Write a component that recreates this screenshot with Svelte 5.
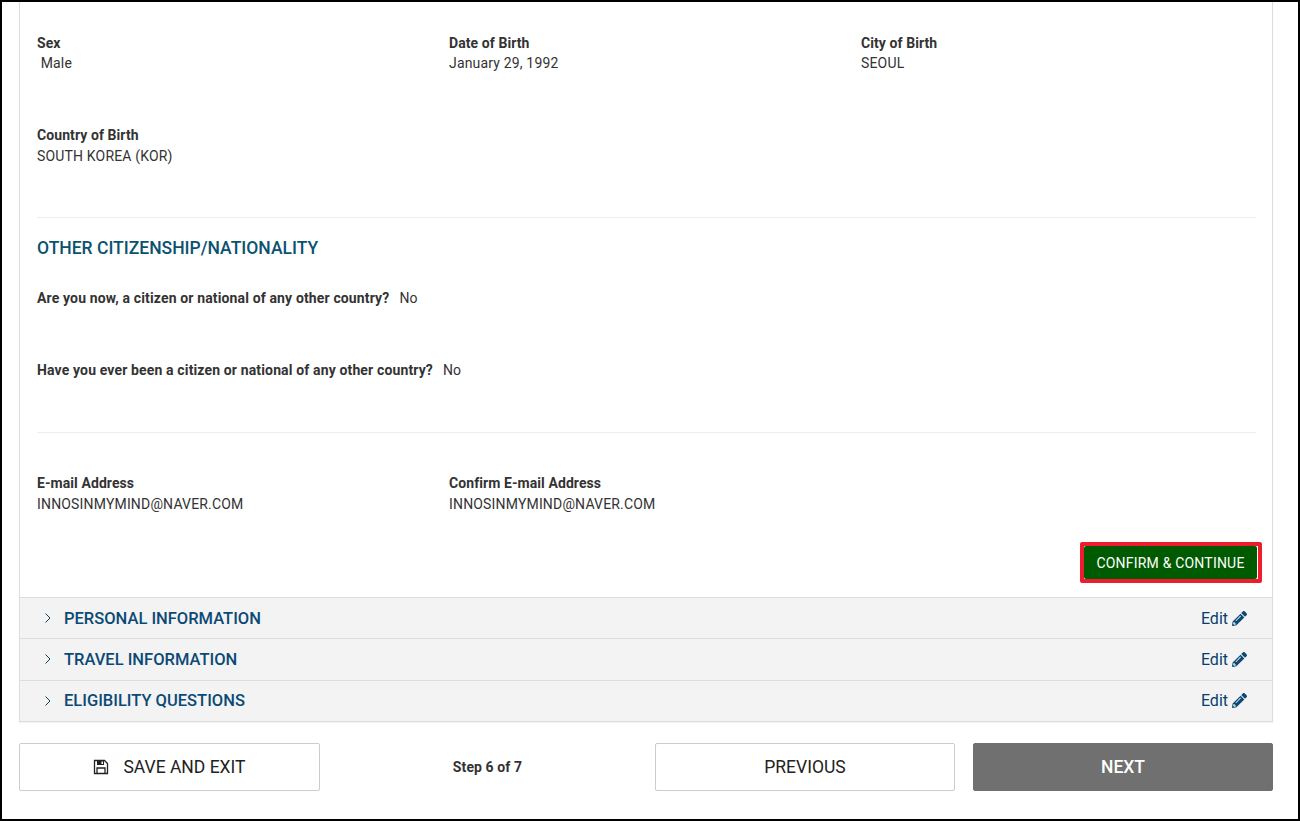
<script>
  const person = [
    { label: "Sex", value: " Male" },
    { label: "Date of Birth", value: "January 29, 1992" },
    { label: "City of Birth", value: "SEOUL" },
    { label: "Country of Birth", value: "SOUTH KOREA (KOR)" }
  ]

  const questions = [
    { q: "Are you now, a citizen or national of any other country?", a: "No" },
    { q: "Have you ever been a citizen or national of any other country?", a: "No" }
  ]

  const emails = [
    { label: "E-mail Address", value: "INNOSINMYMIND@NAVER.COM" },
    { label: "Confirm E-mail Address", value: "INNOSINMYMIND@NAVER.COM" }
  ]

  const sections = ["PERSONAL INFORMATION", "TRAVEL INFORMATION", "ELIGIBILITY QUESTIONS"]
</script>

<main class="page">
  <section class="panel">
    <div class="body">
      <div class="fields person">
        {#each person as f}
          <div class="field">
            <div class="label">{f.label}</div>
            <div class="value">{f.value}</div>
          </div>
        {/each}
      </div>

      <hr class="first" />

      <h2>OTHER CITIZENSHIP/NATIONALITY</h2>
      <div class="questions">
        {#each questions as item}
          <p class="question"><b>{item.q}</b><span>{item.a}</span></p>
        {/each}
      </div>

      <hr class="second" />

      <div class="fields emails">
        {#each emails as f}
          <div class="field">
            <div class="label">{f.label}</div>
            <div class="value">{f.value}</div>
          </div>
        {/each}
      </div>

      <div class="confirm-row">
        <div class="highlight">
          <button class="confirm">CONFIRM &amp; CONTINUE</button>
        </div>
      </div>
    </div>

    {#each sections as name}
      <div class="section">
        <svg class="chevron" viewBox="0 0 8 12" width="8" height="12">
          <path d="M1.5 1.5 6 6l-4.500 4.500" fill="none" stroke="#0b3f5f" stroke-width="1" />
        </svg>
        <span class="name">{name}</span>
        <span class="edit">Edit
          <svg viewBox="0 0 512 512" width="15" height="15">
            <path fill="#0b4a75" d="M497.900 142.100l-46.100 46.100c-4.700 4.700-12.300 4.700-17 0l-111-111c-4.700-4.700-4.700-12.300 0-17l46.100-46.100c18.700-18.700 49.100-18.700 67.900 0l60.100 60.100c18.800 18.700 18.800 49.100 0 67.900zM284.200 99.800L21.600 362.400.4 483.900c-2.900 16.400 11.400 30.600 27.800 27.800l121.500-21.300 262.600-262.600c4.700-4.700 4.700-12.300 0-17l-111-111c-4.800-4.700-12.400-4.700-17.100 0zM124.100 339.900c-5.500-5.500-5.500-14.300 0-19.800l154-154c5.500-5.500 14.300-5.500 19.800 0s5.500 14.300 0 19.800l-154 154c-5.500 5.500-14.300 5.500-19.800 0zM88 424h48v36.300l-64.500 11.300-31.100-31.100L51.700 376H88v48z" />
          </svg>
        </span>
      </div>
    {/each}
  </section>

  <footer class="actions">
    <button class="btn save">
      <svg viewBox="0 0 16 16" width="16" height="16">
        <path d="M1.500 1.500h10l3 3v10h-13z" fill="none" stroke="#222" stroke-width="1.300" />
        <path d="M4 1.500h7v4.500H4z" fill="#222" />
        <path d="M8.500 2.500h1.500v2.500H8.500z" fill="#fff" />
        <path d="M4 14.500V9h8v5.500" fill="none" stroke="#222" stroke-width="1.300" />
      </svg>
      SAVE AND EXIT
    </button>
    <div class="step">Step 6 of 7</div>
    <button class="btn prev">PREVIOUS</button>
    <button class="btn next">NEXT</button>
  </footer>
</main>

<style>
  :global(body) {
    margin: 0;
    background: #fff;
  }

  .page {
    box-sizing: border-box;
    width: 1300px;
    height: 821px;
    border: 2px solid #000;
    padding: 0 25px 0 17px;
    font-family: Roboto, "Liberation Sans", sans-serif;
    font-size: 14px;
    color: #333;
    overflow: hidden;
  }

  .panel {
    border: 1px solid #ddd;
    border-top: 0;
    box-shadow: 0 1px 1px rgba(0, 0, 0, 0.05);
  }

  .body {
    padding: 32px 16px 14px 17px;
  }

  .fields {
    display: grid;
    grid-template-columns: repeat(3, 412px);
  }

  .person {
    row-gap: 54px;
  }

  .label {
    font-weight: 700;
    line-height: 18px;
    letter-spacing: 0.08px;
  }

  .value {
    margin-top: 3px;
    line-height: 18px;
    white-space: pre;
    letter-spacing: 0.17px;
  }

  .person .field:nth-child(-n + 3) .value {
    margin-top: 2px;
  }

  hr {
    border: 0;
    border-top: 1px solid #eee;
    margin: 0;
  }

  hr.first {
    margin-top: 52px;
  }

  h2 {
    margin: 19px 0 0;
    font-size: 17.500px;
    font-weight: 500;
    line-height: 22px;
    color: #0b5270;
  }

  .questions {
    margin-top: 30px;
    display: flex;
    flex-direction: column;
    gap: 54px;
  }

  .question {
    margin: 0;
    line-height: 18px;
  }

  .question b {
    letter-spacing: 0.14px;
  }

  .question span {
    margin-left: 10px;
  }

  hr.second {
    margin-top: 53px;
  }

  .emails {
    margin-top: 41px;
  }

  .confirm-row {
    display: flex;
    justify-content: flex-end;
    margin-top: 29px;
    margin-right: -6px;
  }

  .highlight {
    border: 4px solid #ed1c2e;
    border-radius: 2px;
    background: #fff;
    padding: 0 1px 0 0;
    display: flex;
  }

  .confirm {
    height: 33px;
    width: 173px;
    padding: 0;
    border: 0;
    border-radius: 2px;
    background: #005a00;
    color: #fff;
    font: 400 14px Roboto, "Liberation Sans", sans-serif;
    letter-spacing: 0.2px;
  }

  .section {
    display: flex;
    align-items: center;
    height: 41.340px;
    box-sizing: border-box;
    border-top: 1px solid #ddd;
    background: #f3f3f3;
    padding: 0 25px 0 24px;
    color: #0b4a75;
  }

  .chevron {
    margin-right: 12px;
  }

  .name {
    font-size: 16.500px;
    font-weight: 500;
  }

  .edit {
    margin-left: auto;
    display: flex;
    align-items: center;
    gap: 4px;
    font-size: 16px;
    color: #063f6b;
  }

  .actions {
    display: flex;
    align-items: center;
    margin-top: 21px;
  }

  .btn {
    box-sizing: border-box;
    height: 48px;
    border: 1px solid #ccc;
    border-radius: 2px;
    background: #fff;
    color: #222;
    font: 400 17.500px Roboto, "Liberation Sans", sans-serif;
    padding: 0;
  }

  .save {
    width: 301px;
    display: flex;
    align-items: center;
    justify-content: center;
    gap: 14px;
  }

  .step {
    width: 335px;
    text-align: center;
    font-weight: 700;
    font-size: 14px;
    letter-spacing: 0.1px;
  }

  .prev {
    width: 300px;
  }

  .next {
    width: 300px;
    margin-left: 18px;
    background: #707070;
    border-color: #707070;
    color: #fff;
    font-weight: 500;
  }
</style>
